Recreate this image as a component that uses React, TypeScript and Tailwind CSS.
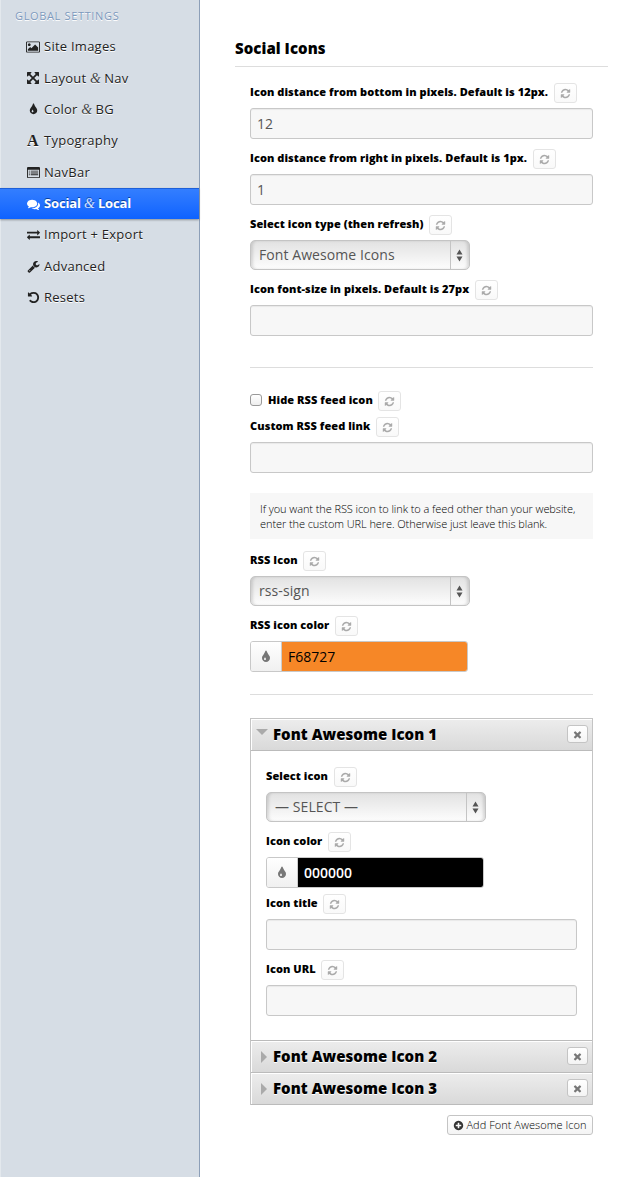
import React from "react";

const PATHS = {
  refresh:
    "M1639 1056q0 5-1 7-64 268-268 434.5t-478 166.5q-146 0-282.5-55t-243.5-157l-129 129q-19 19-45 19t-45-19-19-45v-448q0-26 19-45t45-19h448q26 0 45 19t19 45-19 45l-137 137q71 66 161 102t187 36q134 0 250-65t186-179q11-17 53-117 8-23 30-23h192q13 0 22.5 9.5t9.5 22.5zm25-800v448q0 26-19 45t-45 19h-448q-26 0-45-19t-19-45 19-45l138-138q-148-137-349-137-134 0-250 65t-186 179q-11 17-53 117-8 23-30 23h-199q-13 0-22.5-9.5t-9.5-22.5v-7q65-268 270-434.5t480-166.5q146 0 284 55.5t245 156.5l130-129q19-19 45-19t45 19 19 45z",
  times:
    "M1490 1322q0 40-28 68l-136 136q-28 28-68 28t-68-28l-294-294-294 294q-28 28-68 28t-68-28l-136-136q-28-28-28-68t28-68l294-294-294-294q-28-28-28-68t28-68l136-136q28-28 68-28t68 28l294 294 294-294q28-28 68-28t68 28l136 136q28 28 28 68t-28 68l-294 294 294 294q28 28 28 68z",
  plus:
    "M1344 960v-128q0-26-19-45t-45-19h-256v-256q0-26-19-45t-45-19h-128q-26 0-45 19t-19 45v256h-256q-26 0-45 19t-19 45v128q0 26 19 45t45 19h256v256q0 26 19 45t45 19h128q26 0 45-19t19-45v-256h256q26 0 45-19t19-45zm320-64q0 209-103 385.5t-279.5 279.5-385.5 103-385.5-103-279.5-279.5-103-385.5 103-385.5 279.5-279.5 385.5-103 385.5 103 279.5 279.5 103 385.5z",
  tint:
    "M896 1152q0-36-20-69-1-1-15.5-22.5t-25.5-38-25-44-21-50.5q-4-16-21-16t-21 16q-7 23-21 50.5t-25 44-25.5 38-15.5 22.5q-20 33-20 69 0 53 37.5 90.5t90.5 37.5 90.5-37.5 37.5-90.5zm512-128q0 212-150 362t-362 150-362-150-150-362q0-145 81-275 6-9 62.5-90.5t101-151 99.5-178 83-201.5q9-30 34-47t51-17 51.5 17 33.5 47q28 93 83 201.5t99.5 178 101 151 62.5 90.5q81 127 81 275z",
  undo:
    "M1664 896q0 156-61 298t-164 245-245 164-298 61q-172 0-327-72.5t-264-204.5q-7-10-6.5-22.5t8.5-20.5l137-138q10-9 25-9 16 2 23 12 73 95 179 147t225 52q104 0 198.5-40.5t163.5-109.5 109.5-163.5 40.5-198.5-40.5-198.5-109.5-163.5-163.5-109.5-198.5-40.5q-98 0-188 35.5t-160 101.5l137 138q31 30 14 69-17 40-59 40h-448q-26 0-45-19t-19-45v-448q0-42 40-59 39-17 69 14l130 129q107-101 244.5-156.5t284.5-55.5q156 0 298 61t245 164 164 245 61 298z",
  wrench:
    "M448 1472q0-26-19-45t-45-19-45 19-19 45 19 45 45 19 45-19 19-45zm644-420l-682 682q-37 37-90 37-52 0-91-37l-106-108q-38-36-38-90 0-53 38-91l681-681q39 98 114.5 173.5t173.5 114.5zm634-435q0 39-23 106-47 134-164.5 217.5t-258.5 83.5q-185 0-316.5-131.5t-131.5-316.5 131.5-316.5 316.5-131.5q58 0 121.5 16.5t107.5 46.5q16 11 16 28t-16 28l-293 169v224l193 107q5-3 79-48.5t135.5-81 70.5-35.5q15 0 23.5 10t8.5 25z",
  exchange:
    "M1792 1184v192q0 13-9.5 22.5t-22.5 9.5h-1376v192q0 13-9.5 22.5t-22.5 9.5q-12 0-24-10l-319-320q-9-9-9-22 0-14 9-23l320-320q9-9 23-9 13 0 22.5 9.5t9.5 22.5v192h1376q13 0 22.5 9.5t9.5 22.5zm0-544q0 14-9 23l-320 320q-9 9-23 9-13 0-22.5-9.5t-9.5-22.5v-192h-1376q-13 0-22.5-9.5t-9.5-22.5v-192q0-13 9.5-22.5t22.5-9.5h1376v-192q0-14 9-23t23-9q12 0 24 10l319 319q9 9 9 23z",
  picture:
    "M576 576q0 80-56 136t-136 56-136-56-56-136 56-136 136-56 136 56 56 136zm1024 384v448h-1408v-192l320-320 160 160 512-512zm96-704h-1600q-13 0-22.5 9.5t-9.5 22.5v1216q0 13 9.5 22.5t22.5 9.5h1600q13 0 22.5-9.5t9.5-22.5v-1216q0-13-9.5-22.5t-22.5-9.5zm160 32v1216q0 66-47 113t-113 47h-1600q-66 0-113-47t-47-113v-1216q0-66 47-113t113-47h1600q66 0 113 47t47 113z",
  comments:
    "M1408 768q0 139-94 257t-256.5 186.5-353.5 68.5q-86 0-176-16-124 88-278 128-36 9-86 16h-3q-11 0-20.5-8t-11.5-21q-1-3-1-6.5t.5-6.5 2-6l2.5-5 3.5-5.5 4-5 4.5-5 4-4.5q5-6 23-25t26-29.5 22.5-29 25-38.5 20.5-44q-124-72-195-177t-71-224q0-139 94-257t256.5-186.5 353.5-68.5 353.5 68.5 256.5 186.5 94 257zm384 256q0 120-71 224.5t-195 176.5q10 24 20.5 44t25 38.5 22.5 29 26 29.5 23 25q1 1 4 4.5t4.5 5 4 5 3.5 5.5l2.5 5 2 6 .5 6.5-1 6.5q-3 14-13 22t-22 7q-50-7-86-16-154-40-278-128-90 16-176 16-271 0-472-132 58 4 88 4 161 0 309-45t264-129q125-92 192-212t67-254q0-77-23-152 129 71 204 178t75 230z",
  arrows:
    "M1411 541l-355 355 355 355 144-144q29-31 70-14 39 17 39 59v448q0 26-19 45t-45 19h-448q-42 0-59-40-17-39 14-69l144-144-355-355-355 355 144 144q31 30 14 69-17 40-59 40h-448q-26 0-45-19t-19-45v-448q0-42 40-59 39-17 69 14l144 144 355-355-355-355-144 144q-19 19-45 19-12 0-24-5-40-17-40-59v-448q0-26 19-45t45-19h448q42 0 59 40 17 39-14 69l-144 144 355 355 355-355-144-144q-31-30-14-69 17-40 59-40h448q26 0 45 19t19 45v448q0 42-39 59-13 5-25 5-26 0-45-19z",
  list:
    "M160 128h1472q66 0 113 47t47 113v1216q0 66-47 113t-113 47h-1472q-66 0-113-47t-47-113v-1216q0-66 47-113t113-47zM128 512v992q0 32 32 32h1472q32 0 32-32v-992zM256 640h128v128h-128zM512 640h1024v128h-1024zM256 896h128v128h-128zM512 896h1024v128h-1024zM256 1152h128v128h-128zM512 1152h1024v128h-1024z",
};

type IconName = keyof typeof PATHS;

function Icon({ name, size, box = "0 0 1792 1792" }: { name: IconName; size: number; box?: string }) {
  return (
    <svg viewBox={box} width={size} height={size} fill="currentColor" fillRule="evenodd" className="block shrink-0">
      <path d={PATHS[name]} />
    </svg>
  );
}

function Amp() {
  return (
    <span className="font-['Liberation_Serif',serif] text-[14px] font-normal italic leading-none tracking-[-0.3px] opacity-80">
      &amp;
    </span>
  );
}

const NAV: { icon: React.ReactNode; label: React.ReactNode; active?: boolean }[] = [
  { icon: <Icon name="picture" size={14} box="-64 -64 1920 1920" />, label: "Site Images" },
  { icon: <Icon name="arrows" size={14} />, label: <>Layout <Amp /> Nav</> },
  { icon: <Icon name="tint" size={13} />, label: <>Color <Amp /> BG</> },
  {
    icon: <span className="font-['Liberation_Serif',serif] text-[16px] font-bold leading-none">A</span>,
    label: "Typography",
  },
  { icon: <Icon name="list" size={13} />, label: "NavBar" },
  { icon: <Icon name="comments" size={13} />, label: <>Social <Amp /> Local</>, active: true },
  { icon: <Icon name="exchange" size={13} />, label: "Import + Export" },
  { icon: <Icon name="wrench" size={13} />, label: "Advanced" },
  { icon: <Icon name="undo" size={13} />, label: "Resets" },
];

function Sidebar() {
  return (
    <aside className="w-[200px] shrink-0 border-r border-l border-r-[#8d9fb8] border-l-[#e3e8ed] bg-[#d6dde5]">
      <h3 className="h-[31px] pl-[14px] pt-2 text-[11px] font-normal leading-4 tracking-[0.65px] text-[#7d99bd] [text-shadow:0_1px_0_#fff]">
        GLOBAL SETTINGS
      </h3>
      <ul>
        {NAV.map((item, i) => (
          <li
            key={i}
            className={
              item.active
                ? "-ml-px flex h-[31.375px] items-center border-t border-[#1d5fd8] bg-linear-to-b from-[#337eff] to-[#0d62ff] pl-[26px] text-[13px] font-bold tracking-[-0.14px] text-white shadow-[0_1px_2px_rgba(0,0,0,0.35)] [text-shadow:0_-1px_0_#0b3f9e]"
                : "flex h-[31.375px] items-center pl-[25px] text-[13px] font-medium tracking-[0.25px] text-[#222] [text-shadow:0_1px_0_#fff]"
            }
          >
            <span className="mr-1 flex w-[14px] justify-center">{item.icon}</span>
            <span className={item.active ? "-mt-0.5 whitespace-nowrap leading-5" : "-mt-px whitespace-nowrap leading-5"}>
              {item.label}
            </span>
          </li>
        ))}
      </ul>
    </aside>
  );
}

function Label({ children }: { children: React.ReactNode }) {
  return (
    <div className="mb-[5px] flex h-5 items-center text-[11px] font-extrabold tracking-[0.065px] text-black">
      <span className="-mt-0.5 whitespace-nowrap leading-4">{children}</span>
      <button className="ml-[5.6px] flex h-5 w-[23px] items-center justify-center rounded-[3px] border border-[#e4e4e4] bg-linear-to-b from-white to-[#f9f9f9] text-[#aaa]">
        <Icon name="refresh" size={11} />
      </button>
    </div>
  );
}

function Input({ value = "" }: { value?: string }) {
  return (
    <div className="flex h-[31px] items-center rounded-[3px] border border-[#c8c8c8] bg-[#f7f7f7] px-[6px] text-[14px] text-[#555] shadow-[inset_0_1px_1px_rgba(0,0,0,0.06)]">
      {value}
    </div>
  );
}

function Select({ value }: { value: string }) {
  return (
    <div className="flex h-[30px] w-[220px] items-stretch rounded-[5px] border border-[#c4c4c4] bg-linear-to-b from-[#e2e2e2] to-[#fdfdfd] text-[14px] text-[#555] shadow-[inset_3px_0_3px_-1px_rgba(0,0,0,0.13),inset_-3px_0_3px_-1px_rgba(0,0,0,0.13)]">
      <span className="flex flex-1 items-center pb-0.5 pl-2 tracking-[0.08px]">{value}</span>
      <span className="flex w-[19px] items-center justify-center border-l border-[#c4c4c4] pr-px">
        <svg viewBox="0 0 7 13" width="7" height="13" className="block fill-[#555]">
          <path d="M3.5 0.5L6.5 5.5H0.5zM3.5 12.5L6.5 7.5H0.5z" />
        </svg>
      </span>
    </div>
  );
}

function ColorField({ value, dark = false }: { value: string; dark?: boolean }) {
  return (
    <div className="flex h-[31px] w-[218px] overflow-hidden rounded-[3px] border border-[#c8c8c8]">
      <span className="flex w-[31px] items-center justify-center border-r border-[#ccc] bg-linear-to-b from-white to-[#f0f0f0] text-[#777]">
        <Icon name="tint" size={14} />
      </span>
      <span
        className={
          dark
            ? "flex flex-1 items-center bg-black pl-[6px] text-[14px] font-semibold text-white"
            : "flex flex-1 items-center bg-[#f68727] pl-[6px] text-[14px] text-black"
        }
      >
        {value}
      </span>
    </div>
  );
}

function PanelHeader({ title, open = false }: { title: string; open?: boolean }) {
  return (
    <div className="flex h-8 items-center border-b border-[#bbb] bg-linear-to-b from-[#ededed] to-[#d9d9d9] pr-1 shadow-[inset_1px_1px_0_#fff]">
      <span className="flex w-[22px] justify-center">
        {open ? (
          <svg viewBox="0 0 12 6" width="12" height="6" className="-mt-1.5 block fill-[#aaa]">
            <path d="M0 0h12L6 6z" />
          </svg>
        ) : (
          <svg viewBox="0 0 6 12" width="6" height="12" className="ml-[3px] block fill-[#aaa]">
            <path d="M0 0v12l6-6z" />
          </svg>
        )}
      </span>
      <h4 className="-mt-0.5 flex-1 text-[15px] font-extrabold leading-5 tracking-[0.03px] text-black [text-shadow:0_1px_0_#fff]">
        {title}
      </h4>
      <button className="-mt-px flex h-[18px] w-[21px] items-center justify-center rounded-[3px] border border-[#c4c4c4] bg-linear-to-b from-white to-[#f4f4f4] text-[#777]">
        <Icon name="times" size={11} />
      </button>
    </div>
  );
}

export default function App() {
  return (
    <div className="flex h-[1177px] w-[622px] overflow-hidden bg-white font-['Open_Sans',sans-serif]">
      <Sidebar />
      <main className="w-[422px] pl-[35px] pr-[14px]">
        <h2 className="mb-4 h-[67px] border-b border-[#ddd] pt-[38px] text-[15px] font-extrabold leading-5 tracking-[0.05px] text-black">
          Social Icons
        </h2>
        <div className="mx-[15px] flex flex-col">
          <div className="flex flex-col gap-[10px]">
            <div>
              <Label>Icon distance from bottom in pixels. Default is 12px.</Label>
              <Input value="12" />
            </div>
            <div>
              <Label>Icon distance from right in pixels. Default is 1px.</Label>
              <Input value="1" />
            </div>
            <div>
              <Label>Select icon type (then refresh)</Label>
              <Select value="Font Awesome Icons" />
            </div>
            <div>
              <Label>Icon font-size in pixels. Default is 27px</Label>
              <Input />
            </div>
          </div>

          <hr className="mb-[23px] mt-[31px] border-[#ddd]" />

          <div className="mb-px flex">
            <span className="mr-[6px] mt-[3px] h-3 w-3 rounded-[3px] border border-[#999] bg-linear-to-b from-white to-[#eee]" />
            <Label>Hide RSS feed icon</Label>
          </div>
          <Label>Custom RSS feed link</Label>
          <Input />
          <p className="mb-3 mt-5 h-[46px] whitespace-nowrap bg-[#f7f7f7] pl-[10px] pt-2 text-[11px] font-light leading-[15px] tracking-[-0.075px] text-black">
            If you want the RSS icon to link to a feed other than your website,
            <br />
            enter the custom URL here. Otherwise just leave this blank.
          </p>
          <div className="flex flex-col gap-[10px]">
            <div>
              <Label>RSS Icon</Label>
              <Select value="rss-sign" />
            </div>
            <div>
              <Label>RSS icon color</Label>
              <ColorField value="F68727" />
            </div>
          </div>

          <hr className="mb-[23px] mt-[22px] border-[#ddd]" />

          <section className="border border-b-0 border-[#c4c4c4]">
            <PanelHeader title="Font Awesome Icon 1" open />
            <div className="flex h-[290px] flex-col border-b border-[#bbb] px-[15px] pt-4">
              <Label>Select icon</Label>
              <Select value="— SELECT —" />
              <div className="mt-[10px]">
                <Label>Icon color</Label>
                <ColorField value="000000" dark />
              </div>
              <div className="mt-1.5">
                <Label>Icon title</Label>
                <Input />
              </div>
              <div className="mt-[10px]">
                <Label>Icon URL</Label>
                <Input />
              </div>
            </div>
            <PanelHeader title="Font Awesome Icon 2" />
            <PanelHeader title="Font Awesome Icon 3" />
          </section>

          <button className="mt-[10px] flex h-5 w-[146px] items-center justify-center gap-[2px] self-end whitespace-nowrap rounded-[3px] border border-[#c4c4c4] bg-linear-to-b from-white to-[#f4f4f4] text-[11px] font-light tracking-[0.04px] text-black">
            <span className="text-[#333]">
              <Icon name="plus" size={11} />
            </span>
            Add Font Awesome Icon
          </button>
        </div>
      </main>
    </div>
  );
}
